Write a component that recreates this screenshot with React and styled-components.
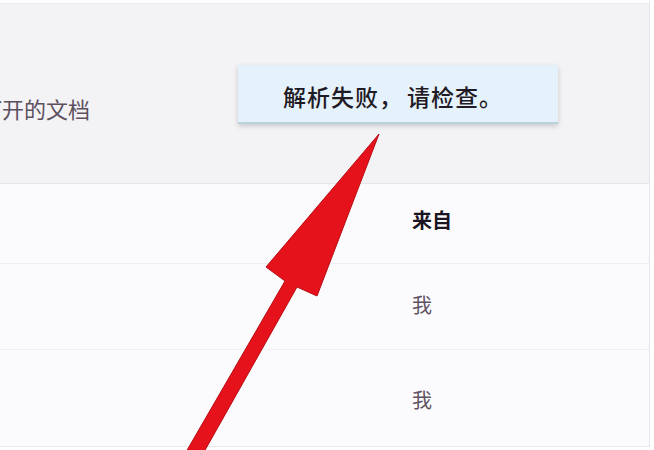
import React from "react";
import styled, { createGlobalStyle } from "styled-components";

const GlobalStyle = createGlobalStyle`
  html, body {
    margin: 0;
    padding: 0;
    background: #ffffff;
  }
  body {
    font-family: "Noto Sans CJK SC", "Noto Sans", sans-serif;
  }
`;

const Page = styled.div`
  position: relative;
  width: 654px;
  height: 450px;
  overflow: hidden;
  background: #ffffff;
`;

const Panel = styled.div`
  width: 650px;
  height: 447px;
  border-right: 1px solid #e6e6ea;
  border-bottom: 1px solid #e9e9ed;
  box-sizing: border-box;
  display: flex;
  flex-direction: column;
`;

const Header = styled.div`
  height: 183px;
  margin-top: 3px;
  border-top: 1px solid #ebebef;
  box-sizing: border-box;
  background: #f3f3f5;
  border-bottom: 1px solid #e6e6ea;
  display: flex;
  align-items: center;
  overflow: hidden;
`;

const HeaderTitle = styled.span`
  margin-left: -20px;
  margin-top: 28px;
  font-size: 22px;
  color: #5c4f5e;
  white-space: nowrap;
`;

const Row = styled.div`
  height: ${(p) => p.$h}px;
  background: #fbfbfd;
  border-bottom: 1px solid ${(p) => (p.$last ? "transparent" : "#f0f0f3")};
  box-sizing: border-box;
  display: grid;
  grid-template-columns: 412px 1fr;
  align-items: center;
`;

const Cell = styled.span`
  grid-column: 2;
  font-size: 20px;
  font-weight: ${(p) => (p.$strong ? 700 : 400)};
  color: ${(p) => (p.$strong ? "#1b1422" : "#5f5262")};
  margin-top: ${(p) => p.$shift || 0}px;
`;

const Toast = styled.div`
  position: absolute;
  left: 238px;
  top: 65px;
  width: 320px;
  height: 59px;
  box-sizing: border-box;
  background: #e5f2fb;
  border-bottom: 2px solid #b9d3dc;
  box-shadow: 0 2px 5px rgba(0, 0, 0, 0.18);
  display: flex;
  align-items: center;
  justify-content: center;
  padding: 4px 10px 0 0;
  font-size: 23px;
  font-weight: 500;
  color: #1f1a24;
  letter-spacing: 1px;
`;

const Comma = styled.span`
  margin-right: 4px;
`;

const Overlay = styled.svg`
  position: absolute;
  left: 0;
  top: 0;
  pointer-events: none;
`;

export default function App() {
  return (
    <Page>
      <GlobalStyle />
      <Panel>
        <Header>
          <HeaderTitle>打开的文档</HeaderTitle>
        </Header>
        <Row $h={80}>
          <Cell $strong $shift={-9}>来自</Cell>
        </Row>
        <Row $h={87}>
          <Cell $shift={-4}>我</Cell>
        </Row>
        <Row $h={97} $last>
          <Cell $shift={4}>我</Cell>
        </Row>
      </Panel>
      <Toast>
        解析失败<Comma>，</Comma>请检查。
      </Toast>
      <Overlay width="654" height="450" viewBox="0 0 654 450">
        <polygon
          points="379,134 317,296 297,287 204,452 186,452 285,281 266,267"
          fill="#e5121b"
          stroke="#b80d14"
          strokeWidth="1"
          strokeLinejoin="round"
        />
      </Overlay>
    </Page>
  );
}
